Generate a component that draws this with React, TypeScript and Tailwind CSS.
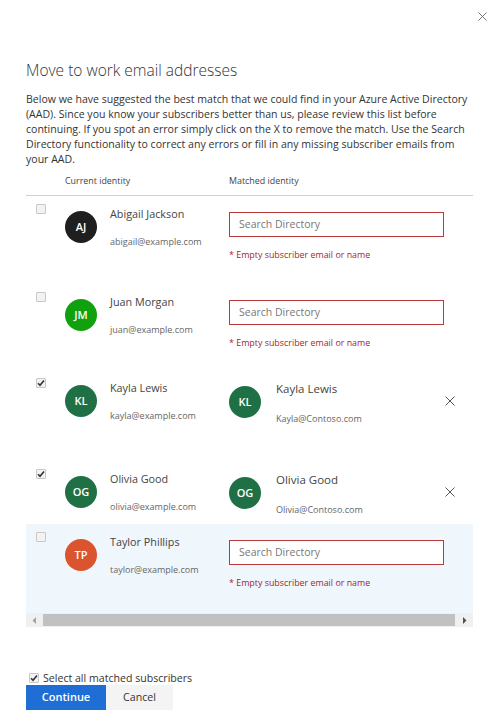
import React from 'react'

type Person = {
  initials: string
  name: string
  email: string
  color: string
  checked: boolean
  match?: { name: string; email: string }
  height: string
  highlight?: boolean
}

const people: Person[] = [
  { initials: 'AJ', name: 'Abigail Jackson', email: 'abigail@example.com', color: 'bg-[#1f1f1f]', checked: false, height: 'h-[88px]' },
  { initials: 'JM', name: 'Juan Morgan', email: 'juan@example.com', color: 'bg-[#12a10e]', checked: false, height: 'h-[86px]' },
  {
    initials: 'KL',
    name: 'Kayla Lewis',
    email: 'kayla@example.com',
    color: 'bg-[#1f7145]',
    checked: true,
    match: { name: 'Kayla Lewis', email: 'Kayla@Contoso.com' },
    height: 'h-[91px]'
  },
  {
    initials: 'OG',
    name: 'Olivia Good',
    email: 'olivia@example.com',
    color: 'bg-[#1f7145]',
    checked: true,
    match: { name: 'Olivia Good', email: 'Olivia@Contoso.com' },
    height: 'h-[63px]'
  },
  { initials: 'TP', name: 'Taylor Phillips', email: 'taylor@example.com', color: 'bg-[#da5430]', checked: false, height: 'h-[89px]', highlight: true }
]

const Check = ({ checked }: { checked: boolean }) => (
  <div className="w-[10px] h-[10px] border border-[#c8c8c8] bg-[#f3f3f3] rounded-[1px] flex items-center justify-center">
    {checked && (
      <svg width="8" height="8" viewBox="0 0 8 8">
        <path d="M1 4.2 L3 6.2 L7 1.5" stroke="#333" strokeWidth="1.6" fill="none" />
      </svg>
    )}
  </div>
)

const Cross = ({ size, color }: { size: number; color: string }) => (
  <svg width={size} height={size} viewBox="0 0 10 10">
    <path d="M0.5 0.5 L9.5 9.5 M9.5 0.5 L0.5 9.5" stroke={color} strokeWidth="1" fill="none" />
  </svg>
)

const Avatar = ({ initials, color }: { initials: string; color: string }) => (
  <div className={`w-[32px] h-[32px] rounded-full ${color} text-white text-[11px] font-semibold flex items-center justify-center`}>
    {initials}
  </div>
)

const Row = ({ p }: { p: Person }) => (
  <div className={`flex ${p.height} ${p.highlight ? 'bg-[#eff6fc]' : ''}`}>
    <div className="w-[39px] pl-[10px] pt-[8px]">
      <Check checked={p.checked} />
    </div>
    <div className="w-[45px] pt-[15px]">
      <Avatar initials={p.initials} color={p.color} />
    </div>
    <div className="w-[119px]">
      <div className="mt-[10px] text-[10.8px] leading-[16px] text-[#444]">{p.name}</div>
      <div className="mt-[13px] text-[9px] leading-[14px] text-[#666]">{p.email}</div>
    </div>
    <div className="w-[216px]">
      {p.match ? (
        <div className="flex pt-[16px]">
          <Avatar initials={p.initials} color={p.color} />
          <div className="ml-[15px]">
            <div className="-mt-[6px] text-[11.5px] leading-[18px] text-[#444]">{p.match.name}</div>
            <div className="mt-[14px] text-[9px] leading-[14px] text-[#666]">{p.match.email}</div>
          </div>
        </div>
      ) : (
        <>
          <div className="mt-[16px] h-[25px] w-[215px] border border-[#b83b3b] bg-white flex items-center pl-[9px] text-[10.5px] text-[#777]">
            Search Directory
          </div>
          <div className="mt-[11px] text-[8.9px] leading-[14px] text-[#a4262c]">* Empty subscriber email or name</div>
        </>
      )}
    </div>
    {p.match && (
      <div className="pt-[26px]">
        <Cross size={10} color="#555" />
      </div>
    )}
  </div>
)

const App = () => {
  return (
    <div className="w-[494px] h-[717px] bg-white relative" style={{ fontFamily: '"Open Sans", "Noto Sans", sans-serif' }}>
      <div className="absolute top-[12px] right-[7px]">
        <Cross size={9} color="#666" />
      </div>
      <div className="pl-[26px] pr-[21px] pt-[58px]">
        <h1 className="text-[15.5px] leading-[24px] font-light text-[#333]">Move to work email addresses</h1>
        <p className="mt-[10px] text-[10.55px] leading-[15px] text-[#333]">
          Below we have suggested the best match that we could find in your Azure Active Directory (AAD). Since you
          know your subscribers better than us, please review this list before continuing. If you spot an error simply
          click on the X to remove the match. Use the Search Directory functionality to correct any errors or fill in
          any missing subscriber emails from your AAD.
        </p>
        <div className="mt-[7px] pl-[39px] pb-[7px] border-b border-[#d0d0d0] flex text-[8.9px] leading-[14px] text-[#444]">
          <div className="w-[164px]">Current identity</div>
          <div>Matched identity</div>
        </div>
        <div className="w-[447px]">
          {people.map(p => (
            <Row key={p.initials} p={p} />
          ))}
          <div className="h-[14px] bg-[#f0f0f0] flex items-center">
            <div className="w-[17px] flex justify-center">
              <svg width="5" height="7" viewBox="0 0 5 7">
                <path d="M4 0 L0.5 3.5 L4 7 Z" fill="#a3a3a3" />
              </svg>
            </div>
            <div className="flex-1 h-[12px] bg-[#c1c1c1]" />
            <div className="w-[18px] flex justify-center">
              <svg width="5" height="7" viewBox="0 0 5 7">
                <path d="M1 0 L4.5 3.5 L1 7 Z" fill="#505050" />
              </svg>
            </div>
          </div>
        </div>
        <div className="mt-[44px] flex items-center pl-[3px] text-[10.6px] leading-[14px] text-[#333]">
          <Check checked={true} />
          <span className="ml-[4px]">Select all matched subscribers</span>
        </div>
        <div className="flex">
          <button className="w-[80px] h-[25px] bg-[#1f6ed6] text-white text-[11px] font-semibold">Continue</button>
          <button className="w-[67px] h-[25px] bg-[#f4f4f4] text-[#333] text-[10.6px]">Cancel</button>
        </div>
      </div>
    </div>
  )
}

export default App
